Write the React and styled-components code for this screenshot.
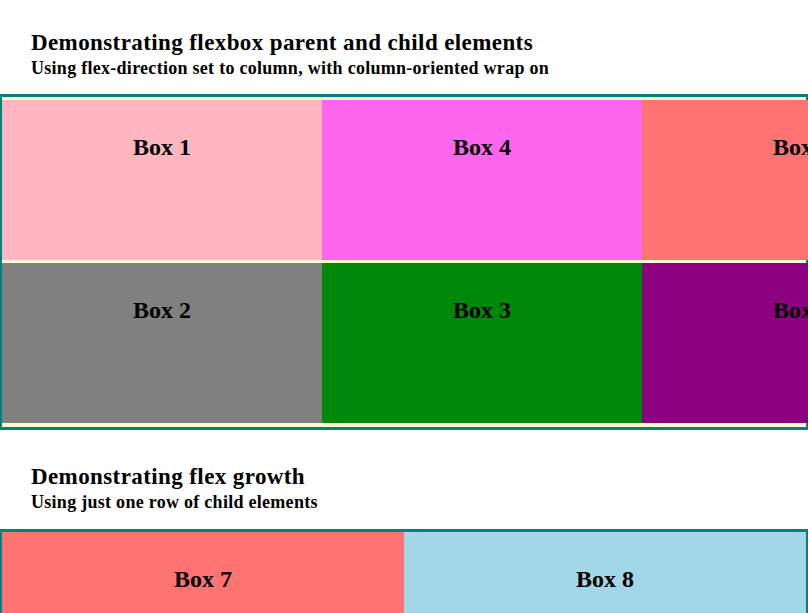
import React from "react";
import styled, { createGlobalStyle } from "styled-components";

const Global = createGlobalStyle`
  html, body { margin: 0; padding: 0; overflow: hidden; background: #ffffff; }
  body { font-family: "Liberation Serif", "Times New Roman", serif; color: #000; }
`;

const Section = styled.section`
  padding-top: ${(p) => p.$top}px;
`;

const Title = styled.h1`
  margin: 0;
  padding-left: 31px;
  font-size: 23px;
  letter-spacing: 0.4px;
  line-height: 24px;
  font-weight: bold;
`;

const Subtitle = styled.h2`
  margin: 0 0 ${(p) => p.$after}px;
  padding-top: 3px;
  padding-left: 31px;
  font-size: 18px;
  letter-spacing: 0.28px;
  line-height: 20px;
  font-weight: bold;
`;

const WrapBox = styled.div`
  box-sizing: border-box;
  margin: 0 -1px;
  width: 810px;
  height: 336px;
  border: 3px solid #008080;
  background: #fffacd;
  padding: 3px 0 4px;
  display: flex;
  flex-direction: column;
  flex-wrap: wrap;
  align-content: flex-start;
  gap: 3px 0;
`;

const GrowBox = styled.div`
  box-sizing: border-box;
  margin: 0 -1px;
  width: 810px;
  border: 3px solid #008080;
  display: flex;
`;

const Item = styled.div`
  box-sizing: border-box;
  flex: ${(p) => (p.$grow ? "1 1 0" : "0 0 auto")};
  width: ${(p) => (p.$grow ? "auto" : "320px")};
  height: 160px;
  background: ${(p) => p.$bg};
  padding-top: 33px;
  text-align: center;
  font-size: 24px;
  line-height: 28px;
  font-weight: bold;
`;

const wrapItems = [
  { label: "Box 1", bg: "#ffb6c1" },
  { label: "Box 2", bg: "#808080" },
  { label: "Box 4", bg: "#ff66ee" },
  { label: "Box 3", bg: "#008808" },
  { label: "Box 5", bg: "#ff7373" },
  { label: "Box 6", bg: "#8c007f" },
];

export default function App() {
  return (
    <>
      <Global />
      <Section $top={31}>
        <Title>Demonstrating flexbox parent and child elements</Title>
        <Subtitle $after={16}>Using flex-direction set to column, with column-oriented wrap on</Subtitle>
        <WrapBox>
          {wrapItems.map((b) => (
            <Item key={b.label} $bg={b.bg}>{b.label}</Item>
          ))}
        </WrapBox>
      </Section>
      <Section $top={35}>
        <Title>Demonstrating flex growth</Title>
        <Subtitle $after={17}>Using just one row of child elements</Subtitle>
        <GrowBox>
          <Item $grow $bg="#ff7373">Box 7</Item>
          <Item $grow $bg="#a2d7e7">Box 8</Item>
        </GrowBox>
      </Section>
    </>
  );
}
